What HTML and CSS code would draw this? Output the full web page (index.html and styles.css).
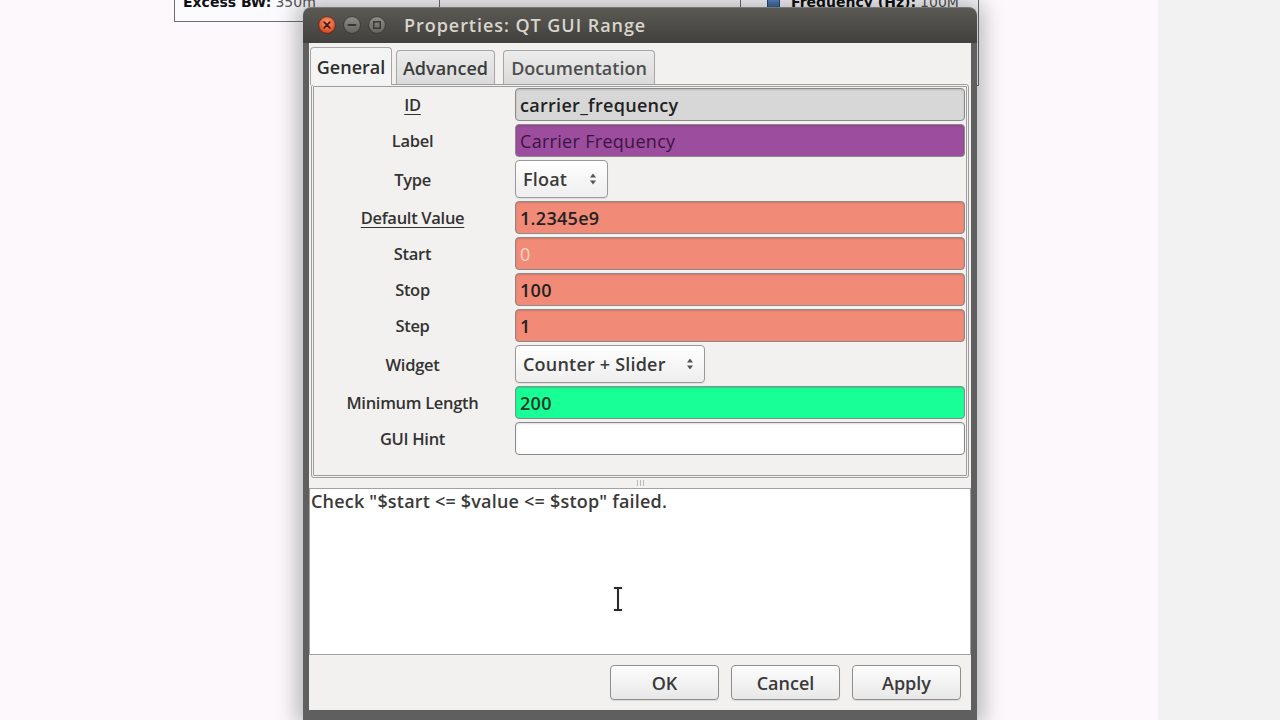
FILE: index.html
```html
<!DOCTYPE html>
<html>
<head>
<meta charset="utf-8">
<title>Properties: QT GUI Range</title>
<link rel="stylesheet" href="styles.css">
</head>
<body>
<div class="desktop">
  <div class="bgwin bgwin-a"><span class="bg-label">Excess BW:</span> <span class="bg-value">350m</span></div>
  <div class="bgwin bgwin-b"><span class="swatch"></span><span class="bg-label">Frequency (Hz):</span> <span class="bg-value">100M</span></div>

  <div class="dialog">
    <div class="titlebar">
      <div class="wm-buttons">
        <svg class="wm-btn" width="18" height="18" viewBox="0 0 18 18">
          <defs><radialGradient id="gclose" cx="50%" cy="35%" r="65%"><stop offset="0" stop-color="#f79a6b"/><stop offset="1" stop-color="#d4431f"/></radialGradient></defs>
          <circle cx="9" cy="9" r="8.4" fill="url(#gclose)" stroke="#5e2412" stroke-width="0.8"/>
          <path d="M6.2 6.2 L11.8 11.8 M11.8 6.2 L6.2 11.8" stroke="#4a1c0e" stroke-width="1.8" stroke-linecap="round"/>
        </svg>
        <svg class="wm-btn" width="18" height="18" viewBox="0 0 18 18">
          <defs><linearGradient id="gmin" x1="0" y1="0" x2="0" y2="1"><stop offset="0" stop-color="#8e8d88"/><stop offset="1" stop-color="#64635e"/></linearGradient></defs>
          <circle cx="9" cy="9" r="8.4" fill="url(#gmin)" stroke="#33322f" stroke-width="0.8"/>
          <path d="M5.5 9 H12.5" stroke="#3a3936" stroke-width="2" stroke-linecap="round"/>
        </svg>
        <svg class="wm-btn" width="18" height="18" viewBox="0 0 18 18">
          <defs><linearGradient id="gmax" x1="0" y1="0" x2="0" y2="1"><stop offset="0" stop-color="#8e8d88"/><stop offset="1" stop-color="#64635e"/></linearGradient></defs>
          <circle cx="9" cy="9" r="8.4" fill="url(#gmax)" stroke="#33322f" stroke-width="0.8"/>
          <rect x="5.8" y="5.8" width="6.4" height="6.4" fill="none" stroke="#3a3936" stroke-width="1.5"/>
        </svg>
      </div>
      <div class="title">Properties: QT GUI Range</div>
    </div>

    <div class="body">
      <div class="tabs">
        <div class="tab tab-active tab-general">General</div>
        <div class="tab tab-advanced">Advanced</div>
        <div class="tab tab-doc">Documentation</div>
      </div>

      <div class="panel">
        <div class="form">
          <div class="lbl"><span class="ul">ID</span></div>
          <div class="field f-id">carrier_frequency</div>

          <div class="lbl">Label</div>
          <div class="field f-label">Carrier Frequency</div>

          <div class="lbl">Type</div>
          <div class="combo combo-type"><span>Float</span>
            <svg width="8" height="14" viewBox="0 0 8 14"><path d="M1 5.5 L4 1.5 L7 5.5 Z M1 8.5 L4 12.5 L7 8.5 Z" fill="#555"/></svg>
          </div>

          <div class="lbl"><span class="ul">Default Value</span></div>
          <div class="field f-err">1.2345e9</div>

          <div class="lbl">Start</div>
          <div class="field f-err f-faint">0</div>

          <div class="lbl">Stop</div>
          <div class="field f-err">100</div>

          <div class="lbl">Step</div>
          <div class="field f-err">1</div>

          <div class="lbl">Widget</div>
          <div class="combo combo-widget"><span>Counter + Slider</span>
            <svg width="8" height="14" viewBox="0 0 8 14"><path d="M1 5.5 L4 1.5 L7 5.5 Z M1 8.5 L4 12.5 L7 8.5 Z" fill="#555"/></svg>
          </div>

          <div class="lbl">Minimum Length</div>
          <div class="field f-ok">200</div>

          <div class="lbl">GUI Hint</div>
          <div class="field f-empty"></div>
        </div>
      </div>

      <div class="splitter"><span class="grip"></span></div>

      <div class="console">Check "$start &lt;= $value &lt;= $stop" failed.
        <svg class="ibeam" width="12" height="26" viewBox="0 0 12 26">
          <path d="M2 2 H10 M6 2 V24 M2 24 H10" stroke="#f4f4f4" stroke-width="4" fill="none" stroke-linecap="round"/>
          <path d="M2 2 H10 M6 2 V24 M2 24 H10" stroke="#2a2a2a" stroke-width="2" fill="none"/>
        </svg>
      </div>

      <div class="buttons">
        <button class="btn">OK</button>
        <button class="btn">Cancel</button>
        <button class="btn">Apply</button>
      </div>
    </div>
  </div>
</div>
</body>
</html>
```

FILE: styles.css
```css
html, body {
  margin: 0;
  padding: 0;
}

body {
  width: 1280px;
  height: 720px;
  overflow: hidden;
  background: linear-gradient(to right, #fcf8fc 0, #fcf8fc 1158px, #f2f2f2 1158px);
  font-family: "Open Sans", "Noto Sans", sans-serif;
}

.desktop {
  position: relative;
  width: 1280px;
  height: 720px;
  overflow: hidden;
}

/* background application widgets (windows on a desktop) */
.bgwin {
  position: absolute;
  background: #fbfaff;
  border: 1px solid #6e6e6e;
  box-sizing: border-box;
  font-family: "DejaVu Sans", sans-serif;
  font-size: 14px;
  color: #111;
  display: flex;
  align-items: flex-end;
  white-space: nowrap;
}

.bgwin-a {
  left: 174px;
  top: -30px;
  width: 266px;
  height: 52px;
  padding: 0 0 11px 8px;
}

.bgwin-b {
  left: 740px;
  top: -40px;
  width: 239px;
  height: 126px;
  align-items: flex-start;
  padding: 33px 0 0 26px;
}

.bg-label {
  font-weight: bold;
}

.bg-value {
  color: #555;
  margin-left: 4px;
}

.swatch {
  display: inline-block;
  width: 11px;
  height: 11px;
  margin: 2px 11px 0 0;
  background: linear-gradient(#6a95c8, #2f5f99);
  border: 1px solid #244a78;
}

/* dialog */
.dialog {
  position: absolute;
  left: 303px;
  top: 7px;
  width: 674px;
  display: flex;
  flex-direction: column;
  border-radius: 8px 8px 0 0;
  box-shadow: 0 0 22px 6px rgba(0, 0, 0, 0.28);
}

.titlebar {
  height: 36px;
  display: flex;
  align-items: center;
  padding-left: 15px;
  background: linear-gradient(#5b5a55, #41403c);
  border-radius: 8px 8px 0 0;
  box-shadow: inset 0 1px 0 rgba(255, 255, 255, 0.18);
}

.wm-buttons {
  display: flex;
  gap: 7px;
}

.wm-btn {
  display: block;
}

.title {
  margin-left: 18px;
  color: #d9d5cc;
  font-size: 18px;
  font-weight: 600;
  letter-spacing: 0.95px;
}

.body {
  background: #f2f1f0;
  border: 6px solid #5f5f5f;
  border-top: 0;
  border-bottom-width: 10px;
  display: flex;
  flex-direction: column;
}

/* tabs */
.tabs {
  display: flex;
  align-items: flex-end;
  height: 37px;
  margin-top: 4px;
  padding-left: 1px;
  position: relative;
  z-index: 2;
}

.tab {
  height: 34px;
  box-sizing: border-box;
  border: 1px solid #a6a6a6;
  border-bottom: 0;
  border-radius: 4px 4px 0 0;
  background: linear-gradient(#ececec, #dadada);
  display: flex;
  align-items: center;
  justify-content: center;
  font-size: 18px;
  font-weight: 600;
  color: #3c3c3c;
}

.tab-active {
  height: 38px;
  margin-bottom: -1px;
  background: #f4f4f4;
  color: #2e2e2e;
}

.tab-general { width: 82px; }
.tab-advanced { width: 99px; margin-left: 4px; }
.tab-doc { width: 152px; margin-left: 8px; color: #4f4f4f; }

/* form panel */
.panel {
  margin-left: 2px;
  width: 658px;
  height: 394px;
  box-sizing: border-box;
  border: 3px double #9e9e9e;
  border-radius: 3px;
  padding: 1px 1px 0 0;
}

.form {
  display: grid;
  grid-template-columns: 197px 450px;
  column-gap: 4px;
  row-gap: 3px;
}

.lbl {
  display: flex;
  align-items: center;
  justify-content: center;
  font-size: 16.5px;
  font-weight: 600;
  letter-spacing: -0.3px;
  color: #333;
}

.ul {
  text-decoration: underline;
  text-underline-offset: 3px;
}

.field {
  height: 33px;
  box-sizing: border-box;
  border: 1px solid #8a8a8a;
  border-radius: 4px;
  padding-left: 4px;
  display: flex;
  align-items: center;
  font-size: 18px;
  font-weight: 600;
  letter-spacing: 0.3px;
  color: #222;
  box-shadow: inset 0 1px 2px rgba(0, 0, 0, 0.14);
}

.f-id { background: #d7d7d7; }
.f-label { background: #9c4d9e; color: #3b1540; font-weight: 500; }
.f-err { background: #f28a78; }
.f-faint { color: #f9d7c8; font-weight: 400; }
.f-ok { background: #18ff96; color: #1a3a26; }
.f-empty { background: #ffffff; }

.combo {
  justify-self: start;
  height: 38px;
  box-sizing: border-box;
  border: 1px solid #9a9a9a;
  border-radius: 4px;
  background: linear-gradient(#ffffff, #eeeeee);
  display: flex;
  align-items: center;
  justify-content: space-between;
  padding: 0 10px 0 7px;
  font-size: 18px;
  font-weight: 600;
  letter-spacing: 0.2px;
  color: #3a3a3a;
  box-shadow: 0 1px 1px rgba(0, 0, 0, 0.08);
}

.combo svg { display: block; }

.combo-type { width: 93px; }
.combo-widget { width: 190px; }

/* splitter */
.splitter {
  height: 10px;
  display: flex;
  justify-content: center;
  align-items: center;
}

.grip {
  width: 5px;
  height: 6px;
  border-left: 1px solid #b8b8b8;
  border-right: 1px solid #b8b8b8;
  background: linear-gradient(to right, transparent 2px, #b8b8b8 2px, #b8b8b8 3px, transparent 3px);
}

/* message console */
.console {
  position: relative;
  height: 167px;
  box-sizing: border-box;
  background: #ffffff;
  border: 1px solid #a2a2a2;
  padding: 0 1px;
  font-size: 18px;
  font-weight: 600;
  letter-spacing: 0.2px;
  line-height: 25px;
  color: #3a3a3a;
}

.ibeam {
  position: absolute;
  left: 302px;
  top: 97px;
}

/* buttons */
.buttons {
  display: flex;
  justify-content: flex-end;
  gap: 12px;
  padding: 10px 10px 10px 0;
}

.btn {
  width: 109px;
  height: 35px;
  box-sizing: border-box;
  border: 1px solid #8e8e8e;
  border-radius: 4px;
  background: linear-gradient(#fdfdfd, #e8e8e8);
  font-family: "Open Sans", "Noto Sans", sans-serif;
  font-size: 18px;
  font-weight: 600;
  color: #3a3a3a;
  padding: 0;
  box-shadow: 0 1px 1px rgba(0, 0, 0, 0.1);
}
```
